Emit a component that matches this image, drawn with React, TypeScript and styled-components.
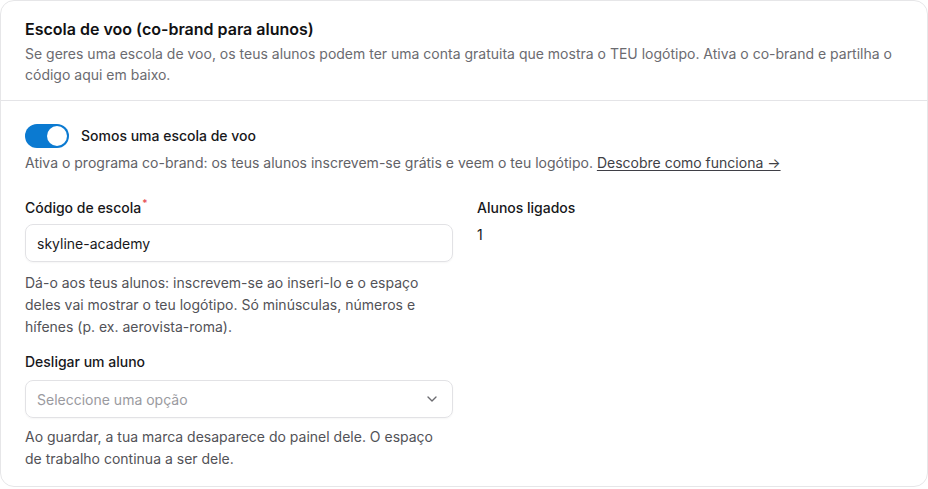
import React from "react";
import styled, { createGlobalStyle } from "styled-components";

const Global = createGlobalStyle`
  html, body { margin: 0; padding: 0; background: #ffffff; }
  body { font-family: Inter, "Noto Sans", sans-serif; color: #18181b; -webkit-font-smoothing: antialiased; }
  * { box-sizing: border-box; }
`;

const Card = styled.section`
  width: 928px;
  height: 487px;
  border: 1px solid #e6e6e8;
  border-radius: 14px;
  background: #fff;
  overflow: hidden;
`;

const Header = styled.header`
  padding: 16px 24px 15px;
  border-bottom: 1px solid #e4e4e7;
`;

const Title = styled.h2`
  margin: 0;
  font-size: 16px;
  line-height: 24px;
  font-weight: 600;
  color: #111113;
`;

const Desc = styled.p`
  margin: 2px 0 0;
  font-size: 14px;
  line-height: 21px;
  color: #6b6b70;
`;

const Body = styled.div`
  padding: 23px 24px 0;
`;

const ToggleRow = styled.label`
  display: flex;
  align-items: center;
  gap: 12px;
  font-size: 14px;
  font-weight: 500;
  line-height: 24px;
  color: #18181b;
`;

const Switch = styled.span<{ $on: boolean }>`
  position: relative;
  width: 44px;
  height: 24px;
  border-radius: 12px;
  background: ${(p) => (p.$on ? "#0b7ad1" : "#d4d4d8")};
  flex-shrink: 0;
  &::after {
    content: "";
    position: absolute;
    top: 2px;
    left: ${(p) => (p.$on ? "22px" : "2px")};
    width: 20px;
    height: 20px;
    border-radius: 50%;
    background: #fff;
  }
`;

const Help = styled.p<{ $mt?: number }>`
  margin: ${(p) => p.$mt ?? 4}px 0 0;
  font-size: 14px;
  line-height: 21px;
  color: #626267;
`;

const FieldHelp = styled.p<{ $mt?: number }>`
  margin: ${(p) => p.$mt ?? 10}px 0 0;
  font-size: 14px;
  line-height: 22px;
  color: #525257;
`;

const Link = styled.a`
  color: #3f3f46;
  text-decoration: underline;
  text-underline-offset: 2px;
`;

const Grid = styled.div`
  display: grid;
  grid-template-columns: 428px 428px;
  column-gap: 24px;
  margin-top: 24px;
`;

const Column = styled.div`
  display: flex;
  flex-direction: column;
`;

const Field = styled.div<{ $mt?: number }>`
  display: flex;
  flex-direction: column;
  margin-top: ${(p) => p.$mt ?? 0}px;
`;

const Label = styled.span`
  font-size: 14px;
  line-height: 21px;
  font-weight: 500;
  color: #18181b;
`;

const Req = styled.sup`
  color: #e5484d;
  font-size: 10px;
  line-height: 0;
  margin-left: 1px;
`;

const Input = styled.div<{ $mt?: number }>`
  margin-top: ${(p) => p.$mt ?? 6}px;
  height: 38px;
  border: 1px solid #e2e2e5;
  border-radius: 8px;
  padding: 0 12px 0 11px;
  display: flex;
  align-items: center;
  font-size: 14px;
  color: #18181b;
  box-shadow: 0 1px 2px rgba(0, 0, 0, 0.04);
`;

const Select = styled(Input)`
  justify-content: space-between;
  color: #9a9aa0;
`;

const Value = styled.span`
  margin-top: 6px;
  font-size: 14px;
  line-height: 21px;
  color: #18181b;
`;

export default function App() {
  return (
    <>
      <Global />
      <Card>
        <Header>
          <Title>Escola de voo (co-brand para alunos)</Title>
          <Desc>
            Se geres uma escola de voo, os teus alunos podem ter uma conta gratuita que mostra o TEU logótipo. Ativa o
            co-brand e partilha o código aqui em baixo.
          </Desc>
        </Header>
        <Body>
          <ToggleRow>
            <Switch $on />
            Somos uma escola de voo
          </ToggleRow>
          <Help>
            Ativa o programa co-brand: os teus alunos inscrevem-se grátis e veem o teu logótipo.{" "}
            <Link>Descobre como funciona →</Link>
          </Help>
          <Grid>
            <Column>
              <Field>
                <Label>
                  Código de escola<Req>*</Req>
                </Label>
                <Input>skyline-academy</Input>
                <FieldHelp>
                  Dá-o aos teus alunos: inscrevem-se ao inseri-lo e o espaço deles vai mostrar o teu logótipo. Só
                  minúsculas, números e hífenes (p. ex. aerovista-roma).
                </FieldHelp>
              </Field>
              <Field $mt={13}>
                <Label>Desligar um aluno</Label>
                <Select $mt={8}>
                  Seleccione uma opção
                  <svg width="16" height="16" viewBox="0 0 24 24" fill="none" stroke="#6b6b70" strokeWidth="2" strokeLinecap="round" strokeLinejoin="round">
                    <path d="m6 9 6 6 6-6" />
                  </svg>
                </Select>
                <FieldHelp $mt={8}>
                  Ao guardar, a tua marca desaparece do painel dele. O espaço de trabalho continua a ser dele.
                </FieldHelp>
              </Field>
            </Column>
            <Column>
              <Label>Alunos ligados</Label>
              <Value>1</Value>
            </Column>
          </Grid>
        </Body>
      </Card>
    </>
  );
}
